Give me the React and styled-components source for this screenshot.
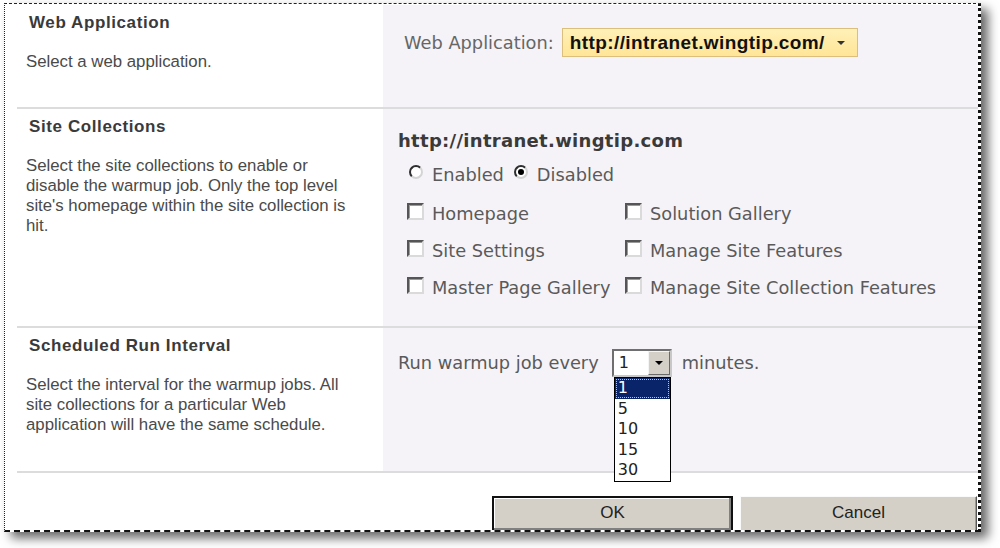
import React from 'react';
import styled, { createGlobalStyle } from 'styled-components';

const Global = createGlobalStyle`
  html, body { margin: 0; padding: 0; background: #fff; }
  #root { width: 1000px; height: 548px; }
`;

const Stage = styled.div`
  width: 1000px;
  height: 548px;
  overflow: hidden;
  background: #fff;
  padding: 3px 0 0 4px;
  box-sizing: border-box;
`;

const Paper = styled.div`
  position: relative;
  width: 977px;
  height: 529px;
  box-sizing: border-box;
  background: #fff;
  border-left: 1px dotted #222;
  border-top: 1px dashed #222;
  border-right: 3px dotted #111;
  border-bottom: 2px dashed #111;
  box-shadow: 7px 6px 10px rgba(0, 0, 0, 0.6);
  padding: 1px 0 0 12px;
  display: flex;
  flex-direction: column;
  overflow: hidden;
`;

const Section = styled.div`
  display: grid;
  grid-template-columns: 366px 1fr;
  height: ${(p) => p.$h}px;
  flex: none;
  box-sizing: border-box;
  border-bottom: 2px solid #dcdcdc;
`;

const LeftCell = styled.div`
  padding: 8px 27px 0 9px;
  font-family: 'Liberation Sans', Arial, sans-serif;
`;

const Title = styled.div`
  font-weight: bold;
  font-size: 17px;
  letter-spacing: 0.6px;
  line-height: 20px;
  color: #3a3a3a;
  padding-left: 3px;
`;

const Desc = styled.div`
  margin-top: 19px;
  font-size: 16.8px;
  line-height: 20px;
  color: #4a4a4a;
`;

const RightCell = styled.div`
  background: #f5f3f7;
  font-family: 'DejaVu Sans', Verdana, sans-serif;
  font-size: 17.8px;
  color: #5a5a5a;
  padding: ${(p) => p.$pad};
  display: flex;
  flex-direction: column;
  align-items: flex-start;
`;

const Row = styled.div`
  display: flex;
  align-items: center;
  height: ${(p) => p.$h || 22}px;
  margin-top: ${(p) => p.$mt || 0}px;
  padding-left: ${(p) => p.$pl || 0}px;
`;

const Label = styled.span`
  color: ${(p) => p.$color || '#5a5a5a'};
  line-height: 22px;
  white-space: nowrap;
`;

const AppPicker = styled.div`
  display: flex;
  align-items: center;
  height: 29px;
  box-sizing: border-box;
  margin-left: 8px;
  padding: 0 12px 0 7px;
  background: linear-gradient(#fff1b8, #ffe596);
  border: 1px solid #dcbf7c;
  font-family: 'Liberation Sans', Arial, sans-serif;
  font-weight: bold;
  font-size: 19px;
  letter-spacing: 0.4px;
  color: #111;
`;

const SmallArrow = styled.span`
  width: 0;
  height: 0;
  margin-left: 12px;
  border-left: 4px solid transparent;
  border-right: 4px solid transparent;
  border-top: 4px solid #333;
`;

const Header = styled.div`
  font-weight: bold;
  font-size: 18px;
  letter-spacing: 0.3px;
  line-height: 22px;
  color: #3a3a3a;
`;

const Radio = styled.span`
  position: relative;
  width: 14px;
  height: 14px;
  box-sizing: border-box;
  border-radius: 50%;
  border: 2px solid;
  border-color: #2e2e2e #d4d4d4 #d4d4d4 #2e2e2e;
  background: #fff;
  margin: 0 9px 7px 0;
  flex: none;
  &::after {
    content: '';
    display: ${(p) => (p.$on ? 'block' : 'none')};
    position: absolute;
    left: 2px;
    top: 2px;
    width: 6px;
    height: 6px;
    border-radius: 50%;
    background: #000;
  }
`;

const RadioItem = styled.label`
  display: flex;
  align-items: center;
  margin-right: ${(p) => p.$mr || 0}px;
`;

const Checks = styled.div`
  display: grid;
  grid-template-columns: 218px auto;
  row-gap: 15px;
  margin-top: 17px;
  padding-left: 9px;
`;

const Check = styled.span`
  display: block;
  width: 17px;
  height: 17px;
  box-sizing: border-box;
  border: 2px solid;
  border-color: #555 #dadada #dadada #555;
  box-shadow: inset 1px 1px 0 #9a9a9a;
  background: #fff;
  margin-right: 8px;
  flex: none;
  margin-bottom: 5px;
`;

const CheckItem = styled.label`
  display: flex;
  align-items: center;
  height: 22px;
`;

const SelectWrap = styled.div`
  position: relative;
  margin: 0 10px 0 13px;
`;

const SelectBox = styled.div`
  width: 60px;
  height: 28px;
  box-sizing: border-box;
  border: 2px solid;
  border-color: #6f6f6f #c8c8c8 #c8c8c8 #6f6f6f;
  background: #fff;
  display: flex;
  align-items: stretch;
  font-family: 'DejaVu Sans', Verdana, sans-serif;
  font-size: 16px;
  color: #222;
`;

const SelectValue = styled.span`
  flex: 1;
  padding-left: 5px;
  line-height: 24px;
`;

const SelectButton = styled.span`
  width: 22px;
  background: #d4d0c8;
  border: 1px solid;
  border-color: #f4f4f4 #6a6a6a #6a6a6a #f4f4f4;
  box-sizing: border-box;
  display: flex;
  align-items: center;
  justify-content: center;
  &::after {
    content: '';
    border-left: 4px solid transparent;
    border-right: 4px solid transparent;
    border-top: 4px solid #000;
  }
`;

const List = styled.div`
  position: absolute;
  left: 2px;
  top: 100%;
  width: 57px;
  box-sizing: border-box;
  border: 1px solid #000;
  background: #fff;
  z-index: 5;
  font-family: 'DejaVu Sans', Verdana, sans-serif;
  font-size: 16px;
  color: #222;
`;

const Option = styled.div`
  height: 20.6px;
  line-height: 20px;
  padding-left: 3px;
  box-sizing: border-box;
  background: ${(p) => (p.$sel ? '#0a246a' : 'transparent')};
  color: ${(p) => (p.$sel ? '#fff' : '#222')};
  outline: ${(p) => (p.$sel ? '1px dotted #e8c060' : 'none')};
  outline-offset: -2px;
`;

const Footer = styled.div`
  flex: none;
  display: flex;
  justify-content: flex-end;
  align-items: flex-start;
  gap: 7px;
  padding: 23px 1px 0 0;
`;

const Button = styled.button`
  width: ${(p) => p.$w}px;
  height: 36px;
  box-sizing: border-box;
  background: #d4d0c8;
  font-family: 'Liberation Sans', Arial, sans-serif;
  font-size: 17px;
  color: #222;
  padding: 0 0 3px;
  border: ${(p) => (p.$def ? '2px solid #111' : '1px solid')};
  border-color: ${(p) => (p.$def ? '#111' : '#fafafa #555 #555 #fafafa')};
  box-shadow: ${(p) =>
    p.$def ? 'inset -2px -2px 0 #808080, inset 1px 1px 0 #fff' : 'inset -1px -1px 0 #9a9a9a'};
`;

export default function App() {
  return (
    <>
      <Global />
      <Stage>
        <Paper>
          <Section $h={104}>
            <LeftCell>
              <Title>Web Application</Title>
              <Desc>Select a web application.</Desc>
            </LeftCell>
            <RightCell $pad="23px 0 0 21px">
              <Row $h={29}>
                <Label $color="#666">Web Application:</Label>
                <AppPicker>
                  http://intranet.wingtip.com/
                  <SmallArrow />
                </AppPicker>
              </Row>
            </RightCell>
          </Section>

          <Section $h={219}>
            <LeftCell>
              <Title>Site Collections</Title>
              <Desc>
                Select the site collections to enable or disable the warmup job. Only the top level
                site's homepage within the site collection is hit.
              </Desc>
            </LeftCell>
            <RightCell $pad="21px 0 0 15px">
              <Header>http://intranet.wingtip.com</Header>
              <Row $mt={12} $pl={11}>
                <RadioItem $mr={10}>
                  <Radio />
                  <Label>Enabled</Label>
                </RadioItem>
                <RadioItem>
                  <Radio $on />
                  <Label>Disabled</Label>
                </RadioItem>
              </Row>
              <Checks>
                <CheckItem><Check /><Label>Homepage</Label></CheckItem>
                <CheckItem><Check /><Label>Solution Gallery</Label></CheckItem>
                <CheckItem><Check /><Label>Site Settings</Label></CheckItem>
                <CheckItem><Check /><Label>Manage Site Features</Label></CheckItem>
                <CheckItem><Check /><Label>Master Page Gallery</Label></CheckItem>
                <CheckItem><Check /><Label>Manage Site Collection Features</Label></CheckItem>
              </Checks>
            </RightCell>
          </Section>

          <Section $h={145}>
            <LeftCell>
              <Title>Scheduled Run Interval</Title>
              <Desc>
                Select the interval for the warmup jobs. All site collections for a particular Web
                application will have the same schedule.
              </Desc>
            </LeftCell>
            <RightCell $pad="21px 0 0 15px">
              <Row $h={28}>
                <Label>Run warmup job every</Label>
                <SelectWrap>
                  <SelectBox>
                    <SelectValue>1</SelectValue>
                    <SelectButton />
                  </SelectBox>
                  <List>
                    {['1', '5', '10', '15', '30'].map((v, i) => (
                      <Option key={v} $sel={i === 0}>{v}</Option>
                    ))}
                  </List>
                </SelectWrap>
                <Label>minutes.</Label>
              </Row>
            </RightCell>
          </Section>

          <Footer>
            <Button $def $w={241}>OK</Button>
            <Button $w={237}>Cancel</Button>
          </Footer>
        </Paper>
      </Stage>
    </>
  );
}
